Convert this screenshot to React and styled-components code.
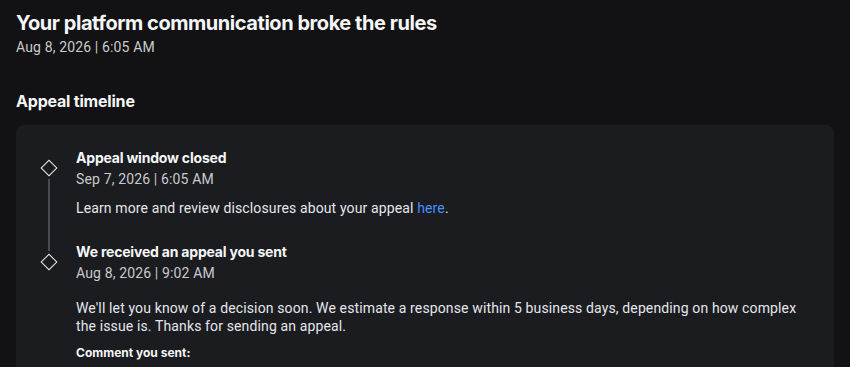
import React from 'react';
import styled, { createGlobalStyle } from 'styled-components';

const GlobalStyle = createGlobalStyle`
  html, body {
    margin: 0;
    padding: 0;
    background: #121214;
  }
  body {
    font-family: Roboto, "Noto Sans", "Liberation Sans", sans-serif;
    color: #e4e6eb;
  }
`;

const Page = styled.div`
  padding: 10px 16px 0 16px;
  width: 818px;
  height: 367px;
  box-sizing: content-box;
  overflow: hidden;
`;

const Title = styled.h1`
  margin: 0;
  font-family: Inter, Roboto, sans-serif;
  font-size: 20px;
  line-height: 26px;
  font-weight: 700;
  color: #f5f6f7;
  letter-spacing: -0.45px;
`;

const Stamp = styled.div`
  font-size: 14px;
  line-height: 20px;
  color: #c8cacd;
  margin-top: 1px;
  letter-spacing: 0.14px;
`;

const SectionTitle = styled.h2`
  margin: 33px 0 0 0;
  font-family: Inter, Roboto, sans-serif;
  font-size: 16px;
  line-height: 22px;
  font-weight: 700;
  color: #f5f6f7;
  letter-spacing: -0.2px;
`;

const Card = styled.div`
  margin-top: 13px;
  background: #1b1c20;
  border-radius: 8px;
  padding: 23px 0 0 22px;
  min-height: 300px;
`;

const Timeline = styled.div`
  display: flex;
  flex-direction: column;
`;

const Item = styled.div`
  display: flex;
  gap: 16px;
`;

const Rail = styled.div`
  width: 22px;
  flex-shrink: 0;
  display: flex;
  flex-direction: column;
  align-items: center;
  padding-top: ${p => p.$top}px;
`;

const Diamond = styled.div`
  width: 10px;
  height: 10px;
  border: 1.5px solid #f0f1f3;
  transform: rotate(45deg);
  flex-shrink: 0;
`;

const Line = styled.div`
  width: 2px;
  flex: ${p => (p.$len ? `0 0 ${p.$len}px` : '1')};
  margin: ${p => (p.$len ? '0 0 5px 0' : '5px 0 0 0')};
  background: #4a4b50;
`;

const Body = styled.div`
  flex: 1;
  padding-bottom: ${p => p.$gap}px;
  padding-right: 30px;
`;

const ItemTitle = styled.div`
  font-family: Inter, Roboto, sans-serif;
  font-size: 14px;
  line-height: 20px;
  font-weight: 700;
  color: #f5f6f7;
  letter-spacing: -0.2px;
`;

const Text = styled.p`
  margin: ${p => p.$top}px 0 0 0;
  font-size: 14px;
  line-height: 18px;
  color: #e4e6eb;
  letter-spacing: 0.13px;
`;

const Link = styled.a`
  color: #4c8dff;
  text-decoration: none;
`;

const Label = styled.div`
  margin-top: 10px;
  font-family: Inter, Roboto, sans-serif;
  font-size: 12px;
  line-height: 16px;
  font-weight: 700;
  color: #f5f6f7;
`;

export default function App() {
  return (
    <Page>
      <GlobalStyle />
      <Title>Your platform communication broke the rules</Title>
      <Stamp>Aug 8, 2026 | 6:05 AM</Stamp>
      <SectionTitle>Appeal timeline</SectionTitle>
      <Card>
        <Timeline>
          <Item>
            <Rail $top={14}>
              <Diamond />
              <Line />
            </Rail>
            <Body $gap={25}>
              <ItemTitle>Appeal window closed</ItemTitle>
              <Stamp>Sep 7, 2026 | 6:05 AM</Stamp>
              <Text $top={10}>
                Learn more and review disclosures about your appeal <Link href="#">here</Link>.
              </Text>
            </Body>
          </Item>
          <Item>
            <Rail $top={0}>
              <Line $len={9} />
              <Diamond />
            </Rail>
            <Body $gap={0}>
              <ItemTitle>We received an appeal you sent</ItemTitle>
              <Stamp>Aug 8, 2026 | 9:02 AM</Stamp>
              <Text $top={16}>
                We'll let you know of a decision soon. We estimate a response within 5 business days, depending on how complex the issue is. Thanks for sending an appeal.
              </Text>
              <Label>Comment you sent:</Label>
            </Body>
          </Item>
        </Timeline>
      </Card>
    </Page>
  );
}
